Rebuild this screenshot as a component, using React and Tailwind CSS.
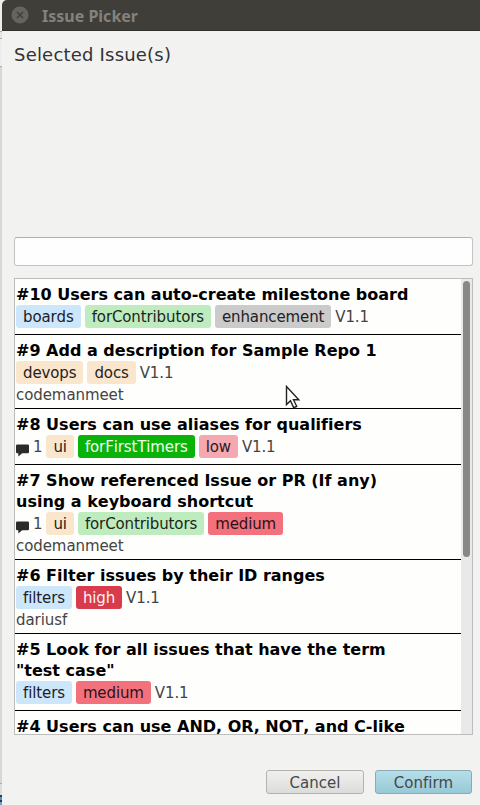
const TAGS = {
  boards: 'bg-[#cce6fb] text-[#1c2126]',
  filters: 'bg-[#cce6fb] text-[#1c2126]',
  forContributors: 'bg-[#bfecbe] text-[#1c261c]',
  enhancement: 'bg-[#cbcbcb] text-[#222222]',
  devops: 'bg-[#fae6cc] text-[#26211c]',
  docs: 'bg-[#fae6cc] text-[#26211c]',
  ui: 'bg-[#fae6cc] text-[#26211c]',
  forFirstTimers: 'bg-[#09b309] text-[#f2fff2]',
  low: 'bg-[#f6a8b1] text-[#2a1c1e]',
  medium: 'bg-[#f3717d] text-[#2a1416]',
  high: 'bg-[#d83b4b] text-[#fff0f2]',
};

const ISSUES = [
  { title: ['#10 Users can auto-create milestone board'], tags: ['boards', 'forContributors', 'enhancement'], milestone: 'V1.1' },
  { title: ['#9 Add a description for Sample Repo 1'], tags: ['devops', 'docs'], milestone: 'V1.1', assignee: 'codemanmeet' },
  { title: ['#8 Users can use aliases for qualifiers'], comments: 1, tags: ['ui', 'forFirstTimers', 'low'], milestone: 'V1.1' },
  { title: ['#7 Show referenced Issue or PR (If any)', 'using a keyboard shortcut'], comments: 1, tags: ['ui', 'forContributors', 'medium'], assignee: 'codemanmeet' },
  { title: ['#6 Filter issues by their ID ranges'], tags: ['filters', 'high'], milestone: 'V1.1', assignee: 'dariusf' },
  { title: ['#5 Look for all issues that have the term', '"test case"'], tags: ['filters', 'medium'], milestone: 'V1.1' },
  { title: ['#4 Users can use AND, OR, NOT, and C-like'], tags: [] },
];

function CommentIcon() {
  return (
    <svg className="mt-[8px] h-[14px] w-[13px] shrink-0" viewBox="0 0 13 14">
      <path d="M1.300 1.500h10.400q1.300 0 1.300 1.300v6.200q0 1.300-1.300 1.300H6.200L2.300 13.500V10.300h-1Q0 10.300 0 9V2.800Q0 1.500 1.300 1.500z" fill="#2b2b2b" />
    </svg>
  );
}

function Issue({ issue }) {
  return (
    <li className="border-b border-black pt-[5px] pb-[6px] pl-px">
      {issue.title.map((line) => (
        <div key={line} className="h-[21px] text-[16px] leading-[21px] font-bold text-black">{line}</div>
      ))}
      <div className="flex h-[23px] items-center gap-[4px] text-[15px] leading-[24px] tracking-[-0.12px] text-[#444444]">
        {issue.comments && (
          <div className="flex gap-[4px]">
            <CommentIcon />
            <span>{issue.comments}</span>
          </div>
        )}
        {issue.tags.map((tag) => (
          <span key={tag} className={`h-[23px] rounded-[3px] px-[7px] ${TAGS[tag]}`}>{tag}</span>
        ))}
        {issue.milestone && <span>{issue.milestone}</span>}
      </div>
      {issue.assignee && <div className="h-[18px] text-[15px] leading-[22px] tracking-[-0.08px] text-[#444444]">{issue.assignee}</div>}
    </li>
  );
}

function Cursor() {
  return (
    <svg className="absolute top-[385px] left-[285px] h-[25px] w-[16px]" viewBox="0 0 16 25">
      <path d="M1.500 1.500v18l4-3.800 3.200 7 3-1.400-3.200-6.500h5.300z" fill="#fff" stroke="#222" strokeWidth="1.400" />
    </svg>
  );
}

export default function App() {
  return (
    <div className="relative flex h-[805px] w-[480px] overflow-hidden bg-[#f2f2f1] font-['DejaVu_Sans',sans-serif] whitespace-nowrap [font-kerning:none] [font-variant-ligatures:none]">
      <div className="flex w-[2px] shrink-0 flex-col bg-[#d7d7d7]">
        <div className="h-[31px] bg-[#eeeeec]" />
        <div className="h-px bg-[#aaa]" />
        <div className="h-[6px] bg-[#e5e5e5]" />
        <div className="h-px bg-[#aaa]" />
        <div className="h-[27px] bg-[#eeeeee]" />
        <div className="h-px bg-[#aaa]" />
        <div className="h-[716px]" />
        <div className="h-px bg-[#aaa]" />
        <div className="h-[11px] bg-[#dddddd]" />
        <div className="h-[2px] bg-[#273c5b]" />
        <div className="h-[3px] bg-[#4f91ca]" />
        <div className="h-[2px] bg-[#273c5b]" />
        <div className="h-[3px] bg-[#6aa0cd]" />
      </div>
      <main className="flex min-w-0 flex-1 flex-col">
        <header className="flex h-[31px] items-center gap-[13px] rounded-tl-[5px] border-b border-[#30302c] bg-[#3f3e39] pl-[9px]">
          <svg className="h-[18px] w-[18px]" viewBox="0 0 18 18">
            <circle cx="9" cy="9" r="8.500" fill="#65645f" />
            <path d="M6 6l6 6M12 6l-6 6" stroke="#403f3a" strokeWidth="1.500" />
          </svg>
          <h1 className="pt-px font-['Noto_Sans','DejaVu_Sans',sans-serif] text-[16px] leading-[20px] font-bold text-[#83827c]">Issue Picker</h1>
        </header>
        <section className="flex flex-1 flex-col pr-[7px] pl-[12px]">
          <h2 className="mt-[12px] h-[24px] text-[18px] leading-[24px] tracking-[0.2px] text-[#333333]">Selected Issue(s)</h2>
          <div className="h-[170px]" />
          <div className="h-[29px] rounded-[3px] border border-[#c3c3c3] border-t-[#b0b0b0] bg-[#fefefe]" />
          <div className="mt-[12px] flex h-[457px] overflow-hidden border border-[#bdbdbd] bg-[#fefefd]">
            <ul className="h-[455px] w-[446px] overflow-hidden">
              {ISSUES.map((issue) => <Issue key={issue.title[0]} issue={issue} />)}
            </ul>
            <div className="flex-1 bg-[#e9e9e9] pt-[2px] pl-[2px]">
              <div className="h-[276px] w-[7px] rounded-full bg-[#888886]" />
            </div>
          </div>
          <div className="mt-[35px] flex justify-end gap-[11px] pr-[1px] text-[15px] leading-[22px] text-[#484848]">
            <button className="h-[24px] w-[98px] rounded-[3px] border border-[#b3b3ab] bg-linear-to-b from-[#f0f0ef] to-[#dcdcda] pt-px">Cancel</button>
            <button className="h-[24px] w-[97px] rounded-[3px] border border-[#8ba9b0] bg-linear-to-b from-[#b4dfea] to-[#98c9d7] pt-px">Confirm</button>
          </div>
        </section>
      </main>
      <Cursor />
    </div>
  );
}
